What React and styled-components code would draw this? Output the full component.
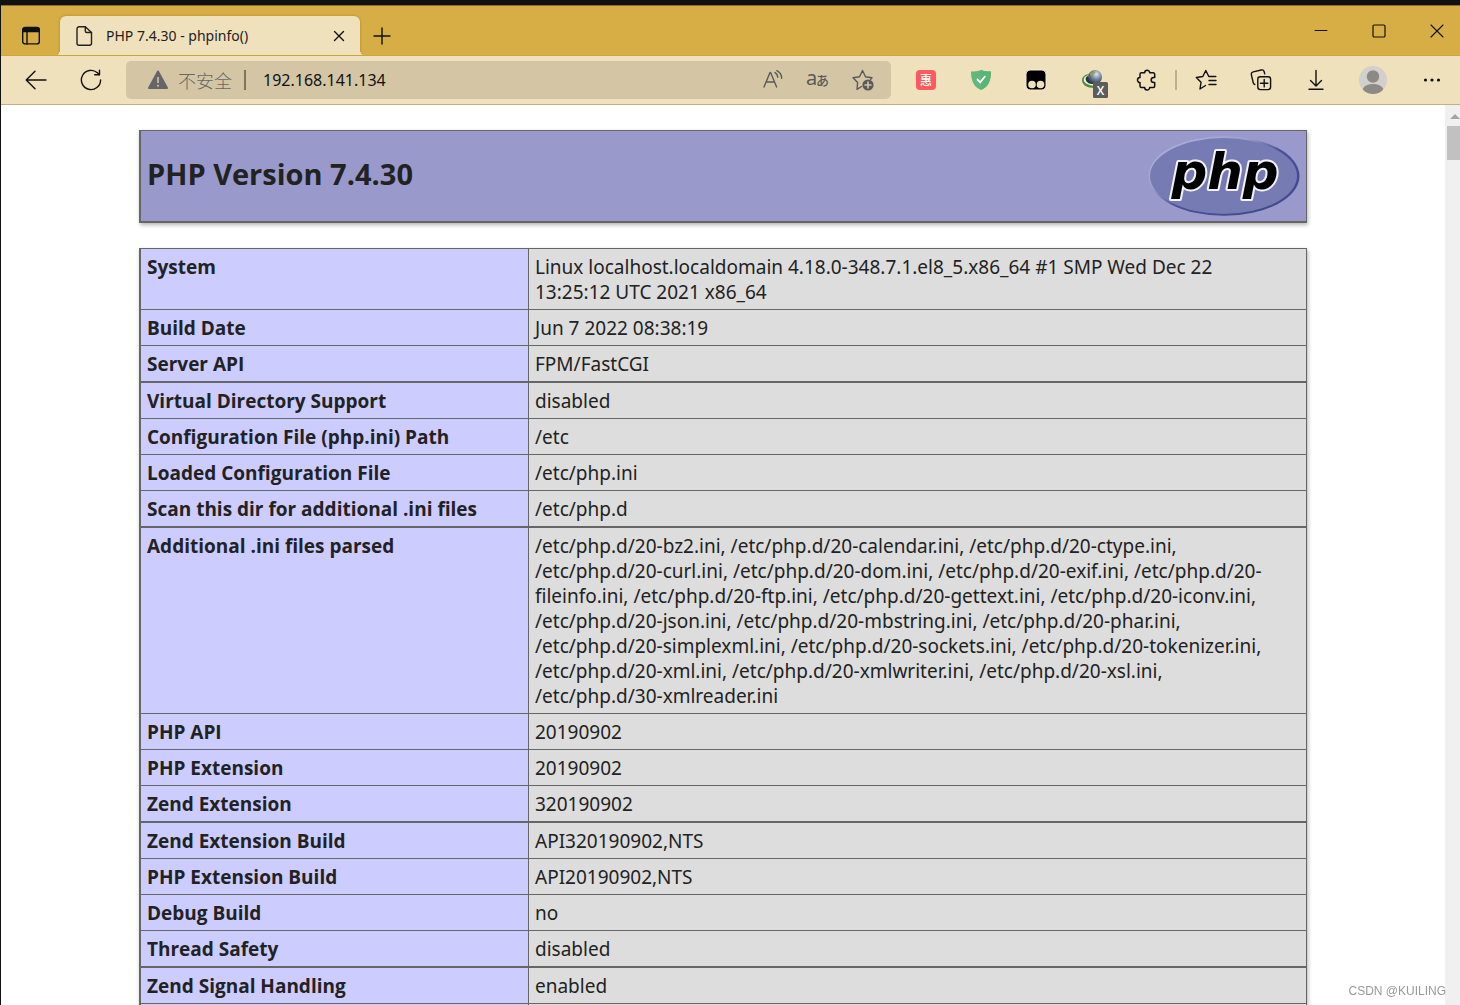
import React from "react";
import styled, { createGlobalStyle } from "styled-components";

const UI_FONT = `"Noto Sans", "Open Sans", "Noto Sans CJK SC", sans-serif`;
const HEADING_FONT = `"Open Sans", "Noto Sans", sans-serif`;

const GlobalStyle = createGlobalStyle`
  *, *::before, *::after { box-sizing: border-box; }
  html, body { margin: 0; overflow: hidden; }
  body { font-family: ${UI_FONT}; color: #222; background: #111; }
  button, input { font-family: inherit; color: inherit; }
`;

const Browser = styled.div`
  display: flex;
  flex-direction: column;
  height: 100vh;
  padding: 5px 0 0 1px;
  background: #111;
`;

/* ---------- tab strip ---------- */

const TabStrip = styled.header`
  display: flex;
  flex: none;
  height: 51px;
  overflow: hidden;
  border-top: 1px solid #8a7032;
  border-bottom: 1px solid #cba544;
  background: #d7ae46;
`;

const PlainButton = styled.button`
  display: flex;
  align-items: center;
  justify-content: center;
  flex: none;
  padding: 0;
  border: 0;
  background: none;
  color: ${(p) => p.$color || "#111"};
  width: ${(p) => p.$width || 55}px;

  svg { display: block; flex: none; }
`;

const StripButton = styled(PlainButton)`
  padding-top: 10px;
`;

const Tab = styled.div`
  position: relative;
  display: flex;
  align-items: center;
  flex: none;
  width: 300px;
  height: 40px;
  margin-top: 10px;
  padding: 0 6px 0 14px;
  border-radius: 6px 6px 0 0;
  background: #f0e1bd;
  box-shadow: 0 0 3px rgba(120, 85, 10, 0.45);
  clip-path: inset(-4px -8px 0 -8px);

  &::before,
  &::after {
    content: "";
    position: absolute;
    bottom: 0;
    width: 6px;
    height: 6px;
  }
  &::before {
    right: 100%;
    background: radial-gradient(circle at 0 0, transparent 6px, #f0e1bd 6px);
  }
  &::after {
    left: 100%;
    background: radial-gradient(circle at 100% 0, transparent 6px, #f0e1bd 6px);
  }
`;

const TabTitle = styled.span`
  flex: 1;
  margin-left: 12px;
  font-size: 14px;
  line-height: 20px;
  color: #222;
  white-space: nowrap;
`;

const WindowButtons = styled.div`
  display: flex;
  height: 50px;
  margin-left: auto;
  margin-right: -6px;
`;

/* ---------- toolbar ---------- */

const Toolbar = styled.div`
  display: flex;
  align-items: stretch;
  flex: none;
  height: 49px;
  padding-left: 7px;
  border-bottom: 1px solid #beb08b;
  background: #f0e1bd;
`;

const AddressBar = styled.form`
  display: flex;
  align-items: center;
  flex: 1;
  min-width: 0;
  margin: 5px 7px 5px 8px;
  padding: 0 6px 0 22px;
  border-radius: 5px;
  background: #d4c6a5;
`;

const SecurityLabel = styled.label`
  display: flex;
  align-items: center;
  gap: 10px;
  font-family: "Noto Sans CJK SC", sans-serif;
  font-weight: 300;
  font-size: 18px;
  line-height: 24px;
  color: #666;
  white-space: nowrap;
`;

const Divider = styled.span`
  flex: none;
  width: 2px;
  height: 20px;
  margin: auto ${(p) => p.$right}px auto ${(p) => p.$left}px;
  background: ${(p) => p.$color};
`;

const AddressInput = styled.input`
  flex: 1;
  min-width: 0;
  padding: 0;
  border: 0;
  outline: 0;
  background: none;
  font-size: 16px;
  line-height: 24px;
  color: #111;
`;

/* ---------- page ---------- */

const PageArea = styled.div`
  display: flex;
  flex: 1;
  min-height: 0;
  background: #fff;
`;

const Page = styled.main`
  flex: 1;
  min-width: 0;
  overflow: hidden;
  padding: 25px 16px 0;
`;

const Panel = styled.section`
  width: 100%;
  max-width: 1168px;
  margin: 0 auto 25px;
  border: 1px solid #666;
  border-left-width: 2px;
  box-shadow: 1px 2px 4px rgba(0, 0, 0, 0.3);
`;

const Banner = styled(Panel)`
  display: flex;
  align-items: center;
  justify-content: space-between;
  padding: 5px 6px;
  border-bottom-width: 2px;
  background: #9999cc;

  svg { display: block; }
`;

const Title = styled.h1`
  margin: 0;
  padding-bottom: 4px;
  font-family: ${HEADING_FONT};
  font-size: 29px;
  line-height: 40px;
  font-weight: 700;
`;

const InfoTable = styled.table`
  width: 100%;
  border-spacing: 0;
  table-layout: fixed;
  font-size: 19px;
  line-height: 25px;

  th, td {
    height: 36px;
    padding: 6px 6px 4px;
    border-bottom: 1px solid #666;
    text-align: left;
    vertical-align: top;
  }
  th {
    width: 387px;
    background: #ccccff;
    font-family: ${HEADING_FONT};
    font-weight: 700;
  }
  td {
    border-left: 1px solid #666;
    background: #dddddd;
  }
`;

const Row = styled.tr`
  && > * {
    border-bottom-width: ${(p) => (p.$heavy ? 2 : 1)}px;
  }
`;

const ScrollTrack = styled.div`
  display: flex;
  flex-direction: column;
  align-items: flex-end;
  flex: none;
  width: 15px;
  overflow: hidden;
  background: #f0f0f0;

  svg { display: block; margin: 9px 0 7px; }
`;

const ScrollThumb = styled.div`
  width: 13px;
  height: 34px;
  background: #c1c1c1;
`;

const Watermark = styled.span`
  position: fixed;
  right: 14px;
  bottom: 6px;
  font-family: "Liberation Sans", Arial, sans-serif;
  font-size: 12px;
  line-height: 16px;
  color: #999;
`;

/* ---------- drawings ---------- */

const Icon = ({ size = 20, width = 1.4, children }) => (
  <svg
    width={size}
    height={size}
    viewBox={`0 0 ${size} ${size}`}
    fill="none"
    stroke="currentColor"
    strokeWidth={width}
    strokeLinecap="round"
    strokeLinejoin="round"
    aria-hidden="true"
  >
    {children}
  </svg>
);

const TabActionsIcon = () => (
  <Icon>
    <rect x="1.7" y="1.7" width="16.6" height="16.2" rx="2.5" />
    <path d="M1.7 5.5V4a2.5 2.5 0 0 1 2.5-2.5h11.6a2.5 2.5 0 0 1 2.5 2.5v1.5z" fill="currentColor" />
    <path d="M6 6v12" />
  </Icon>
);

const PageIcon = () => (
  <Icon>
    <path d="M5 .8h6.3L17.5 6.5v10.8a2 2 0 0 1-2 2H5a2 2 0 0 1-2-2V2.8a2 2 0 0 1 2-2z" />
    <path d="M11.3 .8v4.2a1.5 1.5 0 0 0 1.5 1.5h4.7" />
  </Icon>
);

const CloseIcon = () => (
  <Icon size={12}>
    <path d="M1.5 1.5l9 9M10.5 1.5l-9 9" />
  </Icon>
);

const PlusIcon = () => (
  <Icon size={18}>
    <path d="M9 1v16M1 9h16" />
  </Icon>
);

const MinimizeIcon = () => (
  <Icon size={14} width={1}>
    <path d="M1 6.5h12" />
  </Icon>
);

const MaximizeIcon = () => (
  <Icon size={14} width={1.2}>
    <rect x="1" y="1" width="12" height="12" rx="1.3" />
  </Icon>
);

const WindowCloseIcon = () => (
  <Icon size={14} width={1.1}>
    <path d="M1 1l12 12M13 1L1 13" />
  </Icon>
);

const BackIcon = () => (
  <Icon size={22}>
    <path d="M21 11H1.5M10 2.2L1.2 11l8.8 8.8" />
  </Icon>
);

const ReloadIcon = () => (
  <Icon size={22}>
    <path d="M20.6 11a9.6 9.6 0 1 1-3.2-7.2l1.8 1.7" />
    <path d="M19.5 1.2v4.6h-4.8" />
  </Icon>
);

const WarningIcon = () => (
  <svg width="20" height="20" viewBox="0 0 20 20" aria-hidden="true">
    <path d="M10 1.5L19 18H1z" fill="#666" stroke="#666" strokeWidth="2" strokeLinejoin="round" />
    <path d="M10 7v6" stroke="#d4c6a5" strokeWidth="1.6" />
    <circle cx="10" cy="15.7" r="1" fill="#d4c6a5" />
  </svg>
);

const ReadAloudIcon = () => (
  <Icon size={20} width={1.4}>
    <path d="M1 17L7 2.5h.6L13.6 17M3 12h8.6" />
    <path d="M12 2.6c1.7 1 2.7 2.6 2.7 4.7M13.8 .7c3 1.5 4.8 4.2 4.8 7.6" />
  </Icon>
);

const TranslateIcon = () => (
  <svg width="26" height="34" viewBox="0 0 26 34" fill="currentColor" aria-hidden="true">
    <text x="1" y="22" fontFamily="Noto Sans" fontSize="20">
      a
    </text>
    <text x="11" y="22" fontFamily="Noto Sans CJK JP" fontSize="13" fontWeight="500">
      あ
    </text>
  </svg>
);

const AddFavoriteIcon = () => (
  <Icon size={22} width={1.4}>
    <path d="M9.5 17.5L5 20.3l.6-6.7L1 8.8l6.5-1L10.5 1.5l3 6.3 6.5 1-1.5 1.6" />
    <circle cx="16" cy="16" r="5.6" fill="currentColor" stroke="none" />
    <path d="M16 13v6M13 16h6" stroke="#d4c6a5" strokeWidth="1.6" />
  </Icon>
);

const CouponIcon = () => (
  <svg width="20" height="20" viewBox="0 0 20 20" aria-hidden="true">
    <rect width="20" height="20" rx="4" fill="#fc5a5f" />
    <text x="10" y="14.5" textAnchor="middle" fontFamily="Noto Sans CJK SC" fontSize="12" fontWeight="500" fill="#fff">
      惠
    </text>
  </svg>
);

const ShieldIcon = () => (
  <svg width="20" height="22" viewBox="0 0 20 22" aria-hidden="true">
    <path d="M10 1c3 1.3 6.5 1.6 10 1.6C20 12 17 18.5 10 21 3 18.5 0 12 0 2.6 3.5 2.6 7 2.3 10 1z" fill="#63b77c" />
    <path d="M10 1c3 1.3 6.5 1.6 10 1.6C20 12 17 18.5 10 21z" fill="#58b574" />
    <path d="M6 10l3.2 3.3L14.3 7" fill="none" stroke="#fff" strokeWidth="1.8" />
  </svg>
);

const MonkeyIcon = () => (
  <svg width="22" height="22" viewBox="0 0 22 22" aria-hidden="true">
    <rect x="1" y="1" width="20" height="20" rx="4.5" fill="#000" stroke="#f6ecd2" strokeWidth="1" />
    <circle cx="7" cy="15.5" r="3.8" fill="#f0e1bd" />
    <circle cx="15.5" cy="15.5" r="3.8" fill="#f0e1bd" />
  </svg>
);

const GlobeIcon = () => (
  <svg width="36" height="38" viewBox="0 0 36 38" aria-hidden="true">
    <defs>
      <radialGradient id="globe" cx="0.6" cy="0.3" r="0.8">
        <stop offset="0" stopColor="#e2e7ee" />
        <stop offset="0.45" stopColor="#7583a0" />
        <stop offset="1" stopColor="#1c2638" />
      </radialGradient>
    </defs>
    <path d="M17 13c-5 0-8 3-8 6 0 5 5 8 12 8z" fill="#4c8b41" />
    <path d="M16 14c-4 1-6 3-5 6 1.5 3 5 4 10 5z" fill="#f3f3ea" />
    <path d="M15 15c-3 1-3 4-1 6 2 2 4 2 7 2z" fill="#263a2c" />
    <circle cx="22" cy="16" r="7" fill="url(#globe)" />
    <path d="M17 12.5c1.5-2 4-2.5 5-1.8s-1 2.5-2.5 3.3-2.5.5-2.5-1.500z" fill="#9a9f50" />
    <rect x="20" y="21" width="15" height="16" rx="1.5" fill="#5c5c5c" />
    <text x="27.5" y="33.5" textAnchor="middle" fontFamily="Open Sans" fontSize="12" fontWeight="600" fill="#fff">
      X
    </text>
  </svg>
);

const PuzzleIcon = () => (
  <Icon size={22} width={1.5}>
    <path d="M6.5 3.8h3.2a2.5 2.5 0 0 1 5 0h3.5a1.5 1.5 0 0 1 1.5 1.5v3.3h-1a2.5 2.5 0 0 0 0 5h1v3.3a1.5 1.5 0 0 1-1.5 1.5h-3.5a2.5 2.5 0 0 1-5 0H6.5A1.5 1.5 0 0 1 5 16.9v-3.3a2.5 2.5 0 0 1 0-5V5.3a1.5 1.5 0 0 1 1.5-1.5z" />
  </Icon>
);

const FavoritesIcon = () => (
  <Icon size={22}>
    <path d="M10.5 16.5L5 20l1-6.7-4.7-4.8 6.5-1L10.8 1.5l3 6h7M14 11.5h7M14 15.5h7" />
  </Icon>
);

const CollectionsIcon = () => (
  <Icon size={22}>
    <rect x="7.8" y="7.8" width="12.8" height="12.8" rx="2.5" />
    <path d="M14.2 10.5v7.4M10.5 14.2h7.4" />
    <path d="M4.8 15.5a2.5 2.5 0 0 1-1.6-1.8L1.4 5.9a2.5 2.5 0 0 1 1.8-3l8-1.9a2.5 2.5 0 0 1 3 1.8l.5 2" />
  </Icon>
);

const DownloadIcon = () => (
  <Icon size={22}>
    <path d="M11 1.5v15M5.5 11.5L11 17l5.5-5.5M4 20.3h14" />
  </Icon>
);

const AvatarIcon = () => (
  <svg width="28" height="28" viewBox="0 0 28 28" aria-hidden="true">
    <defs>
      <clipPath id="avatar">
        <circle cx="14" cy="14" r="14" />
      </clipPath>
    </defs>
    <circle cx="14" cy="14" r="14" fill="#d2d0cd" />
    <circle cx="14" cy="10.5" r="6.2" fill="#8d8985" />
    <path d="M4 22.5c1.5-3 5-4.5 10-4.5s8.5 1.5 10 4.5V28H4z" fill="#8d8985" clipPath="url(#avatar)" />
  </svg>
);

const MoreIcon = () => (
  <svg width="18" height="18" viewBox="0 0 18 18" fill="currentColor" aria-hidden="true">
    <circle cx="2.5" cy="9" r="1.6" />
    <circle cx="9" cy="9" r="1.6" />
    <circle cx="15.5" cy="9" r="1.6" />
  </svg>
);

const PhpLogo = () => (
  <svg width="152" height="80" viewBox="0 0 152 80" role="img" aria-label="PHP logo">
    <defs>
      <linearGradient id="rim" x1="0.1" y1="0.1" x2="0.8" y2="0.8">
        <stop offset="0" stopColor="#aeb2d8" />
        <stop offset="0.35" stopColor="#9c9fcd" />
        <stop offset="0.6" stopColor="#4c5096" />
        <stop offset="1" stopColor="#45498f" />
      </linearGradient>
    </defs>
    <ellipse cx="76" cy="40" rx="75.5" ry="39.8" fill="url(#rim)" />
    <ellipse cx="75.5" cy="40" rx="73.5" ry="38" fill="#777bb3" />
    <text
      x="77"
      y="53"
      textAnchor="middle"
      fontFamily="DejaVu Sans"
      fontSize="50"
      fontWeight="700"
      fontStyle="italic"
      fill="#000"
      stroke="#f2f2f8"
      strokeWidth="4"
      strokeLinejoin="round"
      paintOrder="stroke"
    >
      php
    </text>
  </svg>
);

const UpArrow = () => (
  <svg width="10" height="5" viewBox="0 0 10 5" aria-hidden="true">
    <path d="M5 0l5 5H0z" fill="#a3a3a3" />
  </svg>
);

/* ---------- data ---------- */

const extensions = [
  ["Coupons", CouponIcon],
  ["AdGuard", ShieldIcon],
  ["Tampermonkey", MonkeyIcon],
  ["Download manager", GlobeIcon],
  ["Extensions", PuzzleIcon],
];

const tools = [
  ["Favorites", FavoritesIcon, 55],
  ["Collections", CollectionsIcon, 55],
  ["Downloads", DownloadIcon, 55],
  ["Profile", AvatarIcon, 60],
  ["Settings and more", MoreIcon, 57],
];

const info = [
  { name: "System", lines: ["Linux localhost.localdomain 4.18.0-348.7.1.el8_5.x86_64 #1 SMP Wed Dec 22", "13:25:12 UTC 2021 x86_64"] },
  { name: "Build Date", lines: ["Jun 7 2022 08:38:19"] },
  { name: "Server API", lines: ["FPM/FastCGI"], heavy: true },
  { name: "Virtual Directory Support", lines: ["disabled"] },
  { name: "Configuration File (php.ini) Path", lines: ["/etc"] },
  { name: "Loaded Configuration File", lines: ["/etc/php.ini"] },
  { name: "Scan this dir for additional .ini files", lines: ["/etc/php.d"], heavy: true },
  {
    name: "Additional .ini files parsed",
    lines: [
      "/etc/php.d/20-bz2.ini, /etc/php.d/20-calendar.ini, /etc/php.d/20-ctype.ini,",
      "/etc/php.d/20-curl.ini, /etc/php.d/20-dom.ini, /etc/php.d/20-exif.ini, /etc/php.d/20-",
      "fileinfo.ini, /etc/php.d/20-ftp.ini, /etc/php.d/20-gettext.ini, /etc/php.d/20-iconv.ini,",
      "/etc/php.d/20-json.ini, /etc/php.d/20-mbstring.ini, /etc/php.d/20-phar.ini,",
      "/etc/php.d/20-simplexml.ini, /etc/php.d/20-sockets.ini, /etc/php.d/20-tokenizer.ini,",
      "/etc/php.d/20-xml.ini, /etc/php.d/20-xmlwriter.ini, /etc/php.d/20-xsl.ini,",
      "/etc/php.d/30-xmlreader.ini",
    ],
  },
  { name: "PHP API", lines: ["20190902"] },
  { name: "PHP Extension", lines: ["20190902"] },
  { name: "Zend Extension", lines: ["320190902"], heavy: true },
  { name: "Zend Extension Build", lines: ["API320190902,NTS"] },
  { name: "PHP Extension Build", lines: ["API20190902,NTS"] },
  { name: "Debug Build", lines: ["no"] },
  { name: "Thread Safety", lines: ["disabled"], heavy: true },
  { name: "Zend Signal Handling", lines: ["enabled"] },
  { name: "", lines: [] },
];

export default function App() {
  return (
    <Browser>
      <GlobalStyle />
      <TabStrip>
        <StripButton $width={59} aria-label="Tab actions menu">
          <TabActionsIcon />
        </StripButton>
        <Tab>
          <PageIcon />
          <TabTitle>PHP 7.4.30 - phpinfo()</TabTitle>
          <PlainButton $width={30} aria-label="Close tab">
            <CloseIcon />
          </PlainButton>
        </Tab>
        <StripButton $width={44} aria-label="New tab">
          <PlusIcon />
        </StripButton>
        <WindowButtons>
          <PlainButton $width={58} aria-label="Minimize">
            <MinimizeIcon />
          </PlainButton>
          <PlainButton $width={58} aria-label="Maximize">
            <MaximizeIcon />
          </PlainButton>
          <PlainButton $width={58} aria-label="Close window">
            <WindowCloseIcon />
          </PlainButton>
        </WindowButtons>
      </TabStrip>

      <Toolbar>
        <PlainButton aria-label="Back">
          <BackIcon />
        </PlainButton>
        <PlainButton aria-label="Refresh">
          <ReloadIcon />
        </PlainButton>
        <AddressBar onSubmit={(e) => e.preventDefault()}>
          <SecurityLabel htmlFor="address">
            <WarningIcon />
            不安全
          </SecurityLabel>
          <Divider $left={12} $right={17} $color="#7d7561" />
          <AddressInput id="address" type="text" defaultValue="192.168.141.134" />
          <PlainButton type="button" $width={45} $color="#5a5a5a" aria-label="Read aloud">
            <ReadAloudIcon />
          </PlainButton>
          <PlainButton type="button" $width={45} $color="#5a5a5a" aria-label="Translate">
            <TranslateIcon />
          </PlainButton>
          <PlainButton type="button" $width={45} $color="#5a5a5a" aria-label="Add to favorites">
            <AddFavoriteIcon />
          </PlainButton>
        </AddressBar>
        {extensions.map(([label, Drawing]) => (
          <PlainButton key={label} aria-label={label}>
            <Drawing />
          </PlainButton>
        ))}
        <Divider $left={2} $right={1} $color="#bdb08e" />
        {tools.map(([label, Drawing, width]) => (
          <PlainButton key={label} $width={width} aria-label={label}>
            <Drawing />
          </PlainButton>
        ))}
      </Toolbar>

      <PageArea>
        <Page>
          <Banner>
            <Title>PHP Version 7.4.30</Title>
            <PhpLogo />
          </Banner>
          <Panel>
            <InfoTable>
              <tbody>
                {info.map(({ name, lines, heavy }, index) => (
                  <Row key={index} $heavy={heavy}>
                    <th scope="row">{name}</th>
                    <td>
                      {lines.map((line, i) => (
                        <React.Fragment key={line}>
                          {i > 0 && <br />}
                          {line}
                        </React.Fragment>
                      ))}
                    </td>
                  </Row>
                ))}
              </tbody>
            </InfoTable>
          </Panel>
        </Page>
        <ScrollTrack>
          <UpArrow />
          <ScrollThumb />
        </ScrollTrack>
      </PageArea>
      <Watermark>CSDN @KUILING</Watermark>
    </Browser>
  );
}
